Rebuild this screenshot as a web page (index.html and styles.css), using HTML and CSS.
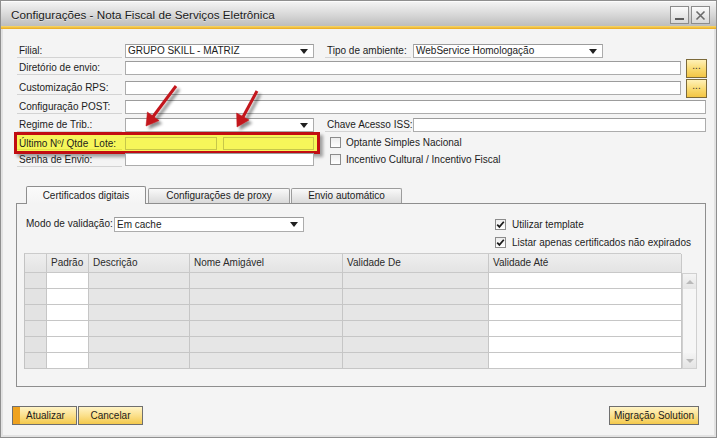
FILE: index.html
```html
<!DOCTYPE html>
<html lang="pt">
<head>
<meta charset="utf-8">
<title>Configurações - Nota Fiscal de Serviços Eletrônica</title>
<link rel="stylesheet" href="styles.css">
</head>
<body>
<div class="window">
  <div class="titlebar">
    <span class="title">Configurações - Nota Fiscal de Serviços Eletrônica</span>
    <div class="winbtns">
      <span class="wbtn min"><span class="minbar"></span></span>
      <span class="wbtn close">
        <svg width="11" height="11" viewBox="0 0 11 11"><path d="M1.5 1.5 L9.5 9.5 M9.5 1.5 L1.5 9.5" stroke="#6a6a6a" stroke-width="1.6" fill="none"/></svg>
      </span>
    </div>
  </div>
  <div class="accent"></div>

  <div class="content">
    <div class="form">
      <div class="row r1">
        <span class="lbl">Filial:</span>
        <span class="fld combo w189"><span>GRUPO SKILL - MATRIZ</span><span class="caret"></span></span>
        <span class="lbl rlbl">Tipo de ambiente:</span>
        <span class="fld combo w190"><span>WebService Homologação</span><span class="caret"></span></span>
      </div>
      <div class="row r2">
        <span class="lbl">Diretório de envio:</span>
        <span class="fld w556"></span>
        <span class="dots">...</span>
      </div>
      <div class="row r3">
        <span class="lbl">Customização RPS:</span>
        <span class="fld w556"></span>
        <span class="dots">...</span>
      </div>
      <div class="row r4">
        <span class="lbl">Configuração POST:</span>
        <span class="fld w581"></span>
      </div>
      <div class="row r5">
        <span class="lbl">Regime de Trib.:</span>
        <span class="fld combo w189"><span></span><span class="caret"></span></span>
        <span class="lbl rlbl">Chave Acesso ISS:</span>
        <span class="fld w293"></span>
      </div>
      <div class="row r6">
        <div class="hl">
          <span class="lbl hllbl">Último Nº/ Qtde&nbsp; Lote:</span>
          <span class="fld yfld w92"></span>
          <span class="fld yfld w91 gap6"></span>
        </div>
        <label class="chk chk1"><span class="box"></span><span>Optante Simples Nacional</span></label>
      </div>
      <div class="row r7">
        <span class="lbl">Senha de Envio:</span>
        <span class="fld w189 h13"></span>
        <label class="chk chk2"><span class="box"></span><span>Incentivo Cultural / Incentivo Fiscal</span></label>
      </div>
    </div>

    <div class="tabs">
      <span class="tab active t1">Certificados digitais</span>
      <span class="tab t2">Configurações de proxy</span>
      <span class="tab t3">Envio automático</span>
    </div>
    <div class="panel">
      <div class="ptop">
        <div class="modo">
          <span class="mlbl">Modo de validação:</span>
          <span class="fld combo w190 h15"><span>Em cache</span><span class="caret"></span></span>
        </div>
        <div class="opts">
          <label class="chk"><span class="box checked"><svg width="9" height="9" viewBox="0 0 9 9"><path d="M1.2 4.6 L3.4 6.9 L7.8 1.8" stroke="#1a1a1a" stroke-width="1.7" fill="none"/></svg></span><span>Utilizar template</span></label>
          <label class="chk"><span class="box checked"><svg width="9" height="9" viewBox="0 0 9 9"><path d="M1.2 4.6 L3.4 6.9 L7.8 1.8" stroke="#1a1a1a" stroke-width="1.7" fill="none"/></svg></span><span>Listar apenas certificados não expirados</span></label>
        </div>
      </div>
      <div class="grid">
        <div class="ghead">
          <span></span><span>Padrão</span><span>Descrição</span><span>Nome Amigável</span><span>Validade De</span><span>Validade Até</span>
        </div>
        <div class="gbody">
          <div class="grows">
            <span class="c0"></span><span class="cw"></span><span class="cg"></span><span class="cg"></span><span class="cg"></span><span class="cw"></span>
            <span class="c0"></span><span class="cw"></span><span class="cg"></span><span class="cg"></span><span class="cg"></span><span class="cw"></span>
            <span class="c0"></span><span class="cw"></span><span class="cg"></span><span class="cg"></span><span class="cg"></span><span class="cw"></span>
            <span class="c0"></span><span class="cw"></span><span class="cg"></span><span class="cg"></span><span class="cg"></span><span class="cw"></span>
            <span class="c0"></span><span class="cw"></span><span class="cg"></span><span class="cg"></span><span class="cg"></span><span class="cw"></span>
            <span class="c0"></span><span class="cw"></span><span class="cg"></span><span class="cg"></span><span class="cg"></span><span class="cw"></span>
          </div>
          <div class="sbar">
            <span class="sbtn"><span class="up"></span></span>
            <span class="strack"></span>
            <span class="sbtn"><span class="down"></span></span>
          </div>
        </div>
      </div>
    </div>

    <div class="footer">
      <span class="btn primary">Atualizar</span>
      <span class="btn cancel">Cancelar</span>
      <span class="btn migr">Migração Solution</span>
    </div>
  </div>

  <svg class="arrows" width="717" height="438" viewBox="0 0 717 438">
    <defs>
      <filter id="sh" x="-50%" y="-50%" width="200%" height="200%">
        <feDropShadow dx="3" dy="3" stdDeviation="1.4" flood-color="#000" flood-opacity="0.45"/>
      </filter>
    </defs>
    <g filter="url(#sh)" fill="#c3141b" stroke="#c3141b">
      <line x1="176" y1="86" x2="152" y2="118" stroke-width="3"/>
      <polygon points="146,126 159,120.6 147.4,112" stroke-width="0.5"/>
      <line x1="257" y1="91" x2="243" y2="117" stroke-width="3"/>
      <polygon points="237,127 249,120 236.6,113" stroke-width="0.5"/>
    </g>
  </svg>
</div>
</body>
</html>
```
FILE: styles.css
```css
* { box-sizing: border-box; }
body {
  margin: 0;
  background: #ffffff;
  font-family: "Liberation Sans", Arial, sans-serif;
  font-size: 10px;
  color: #1c1c1c;
}
.window {
  position: relative;
  width: 717px;
  height: 438px;
  border: 1px solid #8f8f8f;
  background: #f4f4f4;
  box-shadow: inset 0 0 0 2px #e2e2e2;
  overflow: hidden;
}
.titlebar {
  height: 25px;
  display: flex;
  align-items: center;
  justify-content: space-between;
  padding: 0 6px 0 10px;
  background: linear-gradient(#f3f3f3 0%, #dcdcdc 45%, #bdbdbd 100%);
  border-top: 1px solid #fdfdfd;
}
.title {
  font-size: 11.7px;
  color: #1a1a1a;
  text-shadow: 0 1px 0 rgba(255,255,255,0.5);
  padding-top: 1px;
}
.winbtns { display: flex; gap: 2px; padding-top: 2px; }
.wbtn {
  width: 19px;
  height: 18px;
  border: 1px solid #8c8c8c;
  background: linear-gradient(#fbfbfb, #d8d8d8);
  display: flex;
  align-items: center;
  justify-content: center;
}
.wbtn.min { align-items: flex-end; padding-bottom: 3px; }
.minbar { width: 9px; height: 2px; background: #5c5c5c; }
.accent {
  height: 3px;
  background: linear-gradient(#f8d86a, #e9a91f);
}
.content { padding: 15px 0 0 11px; }

/* form rows */
.form { margin-left: 5px; }
.row { display: flex; align-items: flex-start; }
.r1 { height: 17px; }
.r2 { height: 20px; }
.r3 { height: 19px; }
.r4 { height: 18px; }
.r5 { height: 18px; }
.r6 { height: 17px; }
.r7 { height: 13px; }
.lbl {
  width: 105px;
  height: 14px;
  line-height: 13px;
  padding-left: 2px;
  margin-right: 3px;
  border-bottom: 1px solid #d3d3d3;
  white-space: nowrap;
}
.rlbl { width: 86px; margin-left: 11px; margin-right: 2px; }
.fld {
  height: 14px;
  border: 1px solid #acacac;
  border-top-color: #9c9c9c;
  background: #ffffff;
  line-height: 12px;
  padding-left: 2px;
  white-space: nowrap;
}
.h13 { height: 13px; }
.h15 { height: 15px; }
.w189 { width: 189px; }
.w190 { width: 190px; }
.w556 { width: 556px; }
.w581 { width: 581px; }
.w293 { width: 293px; }
.w92 { width: 92px; }
.w91 { width: 91px; }
.gap6 { margin-left: 6px; }
.combo {
  display: flex;
  justify-content: space-between;
  align-items: center;
  padding-right: 5px;
}
.caret {
  width: 0;
  height: 0;
  border-left: 4px solid transparent;
  border-right: 4px solid transparent;
  border-top: 5px solid #202020;
}
.dots {
  width: 21px;
  height: 19px;
  margin-top: -2px;
  margin-left: 5px;
  border: 1px solid #7c6a3a;
  background: linear-gradient(#fff1b8, #f9d96f 55%, #f3c545);
  text-align: center;
  line-height: 11px;
  font-size: 10px;
  color: #333;
}

/* highlighted row */
.hl {
  display: flex;
  align-items: flex-start;
  margin: -4px 0 0 -3px;
  padding: 2px 3px 1px 0;
  border: 3px solid #c10d12;
  background: #f6f65a;
  box-shadow: 3px 3px 3px rgba(0,0,0,0.35);
}
.hllbl { border-bottom-color: #e2e24a; height: 13px; }
.yfld {
  height: 13px;
  background: #f6f65a;
  border-color: #c6c64a;
}
.chk { display: flex; align-items: center; gap: 5px; white-space: nowrap; }
.chk1 { margin-left: 10px; margin-top: 1px; }
.chk2 { margin-left: 16px; margin-top: 1px; }
.box {
  width: 11px;
  height: 11px;
  border: 1px solid #8b8b8b;
  background: linear-gradient(#ededed, #ffffff);
  display: flex;
  align-items: center;
  justify-content: center;
}

/* tabs */
.tabs {
  display: flex;
  align-items: flex-end;
  height: 17px;
  margin-top: 20px;
  padding-left: 14px;
  position: relative;
  z-index: 2;
}
.tab {
  height: 15px;
  border: 1px solid #9c9c9c;
  border-bottom: none;
  background: linear-gradient(#f9f9f9, #dadada);
  text-align: center;
  line-height: 14px;
  border-radius: 2px 2px 0 0;
}
.tab.active {
  height: 18px;
  margin-bottom: -1px;
  border-color: #8e8e8e;
  background: linear-gradient(#fbfbfb, #f4f4f4);
  line-height: 17px;
}
.t1 { width: 120px; }
.t2 { width: 142px; margin-left: 2px; }
.t3 { width: 111px; margin-left: 1px; }

.panel {
  margin-left: 4px;
  width: 690px;
  height: 184px;
  border: 1px solid #8e8e8e;
  padding: 13px 0 0 9px;
}
.ptop { display: flex; height: 36px; }
.modo { display: flex; align-items: flex-start; }
.mlbl { width: 88px; line-height: 14px; white-space: nowrap; }
.opts {
  margin-left: 191px;
  margin-top: 2px;
  display: flex;
  flex-direction: column;
  gap: 7px;
}
.opts .chk { gap: 6px; height: 11px; }

/* grid */
.grid { margin-left: -2px; width: 673px; }
.ghead {
  display: grid;
  grid-template-columns: 22px 42px 101px 153px 146px 193px;
  width: 657px;
  height: 20px;
  background: linear-gradient(#eeeeee, #e3e3e3);
  border-top: 1px solid #cbcbcb;
  border-left: 1px solid #c3c3c3;
}
.ghead span {
  border-right: 1px solid #c8c8c8;
  border-bottom: 1px solid #c8c8c8;
  padding: 2px 0 0 4px;
  line-height: 14px;
  color: #2a2a2a;
  white-space: nowrap;
}
.gbody { display: flex; }
.grows {
  display: grid;
  grid-template-columns: 22px 42px 101px 153px 146px 193px;
  grid-auto-rows: 16px;
  width: 657px;
  border-left: 1px solid #c3c3c3;
}
.grows span { border-right: 1px solid #c6c6c6; border-bottom: 1px solid #c6c6c6; }
.c0 { background: #e3e3e3; }
.cw { background: #ffffff; }
.cg { background: #e6e6e6; }
.sbar {
  width: 16px;
  margin-left: 1px;
  height: 96px;
  border: 1px solid #d0d0d0;
  background: #f3f3f3;
  display: flex;
  flex-direction: column;
}
.sbtn {
  height: 15px;
  background: linear-gradient(#f4f4f4, #e4e4e4);
  display: flex;
  align-items: center;
  justify-content: center;
}
.strack { flex: 1; background: #f6f6f6; }
.up, .down { width: 0; height: 0; border-left: 4px solid transparent; border-right: 4px solid transparent; }
.up { border-bottom: 4px solid #b9b9b9; }
.down { border-top: 4px solid #b9b9b9; }

/* footer */
.footer {
  display: flex;
  width: 687px;
  margin-top: 19px;
}
.btn {
  height: 19px;
  border: 1px solid #6f6f6f;
  background: linear-gradient(#fff4c6, #fbe08c 50%, #f4c94c);
  line-height: 17px;
  text-align: center;
  color: #1c1c1c;
  white-space: nowrap;
}
.primary {
  width: 65px;
  text-align: left;
  padding-left: 13px;
  box-shadow: inset 7px 0 0 #efa21f;
}
.cancel { width: 65px; margin-left: 1px; }
.migr { width: 90px; margin-left: auto; }

.arrows {
  position: absolute;
  left: -1px;
  top: -1px;
  pointer-events: none;
}
```
